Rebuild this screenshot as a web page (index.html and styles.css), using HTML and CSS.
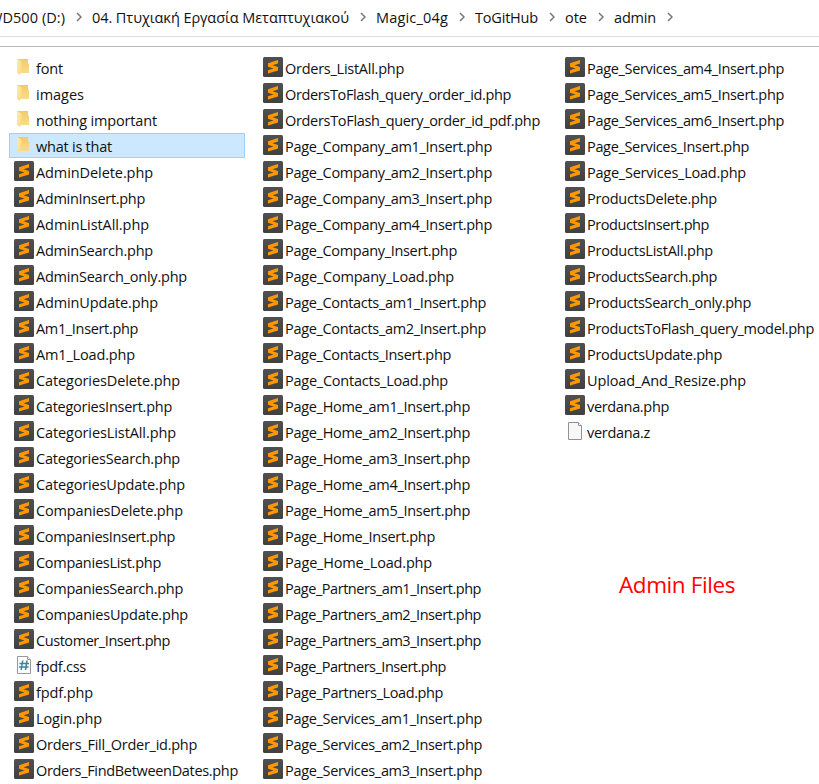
FILE: index.html
```html
<!DOCTYPE html>
<html lang="el">
<head>
<meta charset="utf-8">
<title>admin</title>
<link rel="stylesheet" href="styles.css">
</head>
<body>
<svg class="defs" width="0" height="0">
  <defs>
    <linearGradient id="front" x1="0" y1="0" x2="1" y2="1"><stop offset="0" stop-color="#ffedb0"/><stop offset="1" stop-color="#f6d880"/></linearGradient>
    <linearGradient id="back" x1="0" y1="0" x2="0" y2="1"><stop offset="0" stop-color="#f0cb68"/><stop offset="1" stop-color="#f8dc8e"/></linearGradient>
    <linearGradient id="dark" x1="0" y1="0" x2="0" y2="1"><stop offset="0" stop-color="#505050"/><stop offset="1" stop-color="#404040"/></linearGradient>
  </defs>
  <symbol id="folder" viewBox="0 0 20 20">
    <path d="M3 2h11v4l1 1v9H5z" fill="url(#back)"/>
    <path d="M3 2l4.500 2.500V14L6 18l-3-2z" fill="url(#front)"/>
  </symbol>
  <symbol id="php" viewBox="0 0 20 20">
    <rect width="20" height="20" rx="1.500" fill="url(#dark)"/>
    <path d="M5 6.200L15 3.100V6.500L9.500 8.200L15 9.900V13.400L5 16.600V13.200L10.500 11.400L5 9.700z" fill="#ff9800"/>
  </symbol>
  <symbol id="page" viewBox="0 0 20 20">
    <path d="M3.500 1.500h10l3 3v14h-13z" fill="#f7f7f7" stroke="#929292"/>
    <path d="M13.500 1.500v3h3" fill="#fff" stroke="#929292"/>
  </symbol>
  <symbol id="css" viewBox="0 0 20 20">
    <path d="M3.500 1.500h10l3 3v14h-13z" fill="#fcfcfc" stroke="#999"/>
    <path d="M13.500 1.500v3h3" fill="#fff" stroke="#999"/>
    <path d="M8.700 5.500L7.200 15M13 5.500L11.500 15M5.500 8.500h9.500M5 12h9.500" fill="none" stroke="#40819f" stroke-width="1.500"/>
  </symbol>
  <symbol id="chevron" viewBox="0 0 6 10"><path d="M1 1l4 4-4 4" fill="none" stroke="#777" stroke-width="1.500"/></symbol>
</svg>
<nav class="path" id="path"></nav>
<main class="files" id="files"></main>
<div class="caption"><span class="fit" data-width="116">Admin Files</span></div>
<script src="list.js"></script>
</body>
</html>
```

FILE: styles.css
```css
html, body { margin: 0; }
body {
  width: 819px;
  height: 784px;
  overflow: hidden;
  position: relative;
  background: #fff;
  color: #111;
  font-family: "Open Sans", "Noto Sans", sans-serif;
  font-size: 14.5px;
}
.defs { position: absolute; }
.path {
  display: flex;
  align-items: center;
  box-sizing: border-box;
  height: 37px;
  border-bottom: 1px solid #dcdcdc;
  white-space: nowrap;
}
.crumb { flex: none; line-height: 36px; }
.crumb:first-child { margin-left: -11px; }
.chevron { flex: none; width: 6px; height: 10px; margin: 0 10px 2px 11px; }
.files {
  display: grid;
  grid-template-columns: 249px 302px 250px;
  margin-top: 9px;
  padding: 8px 0 0 9px;
  border-top: 1px solid #b9b9b9;
}
.row {
  display: flex;
  align-items: center;
  box-sizing: border-box;
  height: 26px;
  padding-left: 5px;
  line-height: 20px;
  white-space: nowrap;
}
.row .fit { margin-top: 2px; }
.selected {
  width: 236px;
  height: 25px;
  margin-bottom: 1px;
  padding: 0 0 0 4px;
  border: 1px solid #99d1ff;
  background: #cce8ff;
}
.row.selected .fit { margin-top: 3px; }
.icon { flex: none; width: 20px; height: 20px; margin: 0 2px 2px 0; }
.fit { display: inline-block; flex: none; }
.caption {
  position: absolute;
  left: 619px;
  top: 569px;
  color: #f00;
  font-size: 22.5px;
  line-height: 32px;
  white-space: nowrap;
}
```

FILE: list.js
```js
const crumbs = [["WD500 (D:)", 76], ["04. Πτυχιακή Εργασία Μεταπτυχιακού", 257], ["Magic_04g", 72],
  ["ToGitHub", 63], ["ote", 22], ["admin", 42]];

const columns = [
  [["font", 27], ["images", 48], ["nothing important", 121], ["what is that", 76],
   ["AdminDelete.php", 117], ["AdminInsert.php", 109], ["AdminListAll.php", 113],
   ["AdminSearch.php", 117], ["AdminSearch_only.php", 151], ["AdminUpdate.php", 122],
   ["Am1_Insert.php", 102], ["Am1_Load.php", 99], ["CategoriesDelete.php", 144],
   ["CategoriesInsert.php", 136], ["CategoriesListAll.php", 140], ["CategoriesSearch.php", 144],
   ["CategoriesUpdate.php", 149], ["CompaniesDelete.php", 147], ["CompaniesInsert.php", 139],
   ["CompaniesList.php", 125], ["CompaniesSearch.php", 147], ["CompaniesUpdate.php", 152],
   ["Customer_Insert.php", 134], ["fpdf.css", 50], ["fpdf.php", 57], ["Login.php", 66],
   ["Orders_Fill_Order_id.php", 161], ["Orders_FindBetweenDates.php", 202]],
  [["Orders_ListAll.php", 119], ["OrdersToFlash_query_order_id.php", 226],
   ["OrdersToFlash_query_order_id_pdf.php", 255], ["Page_Company_am1_Insert.php", 207],
   ["Page_Company_am2_Insert.php", 207], ["Page_Company_am3_Insert.php", 207],
   ["Page_Company_am4_Insert.php", 207], ["Page_Company_Insert.php", 172],
   ["Page_Company_Load.php", 169], ["Page_Contacts_am1_Insert.php", 201],
   ["Page_Contacts_am2_Insert.php", 201], ["Page_Contacts_Insert.php", 166],
   ["Page_Contacts_Load.php", 163], ["Page_Home_am1_Insert.php", 185],
   ["Page_Home_am2_Insert.php", 185], ["Page_Home_am3_Insert.php", 185],
   ["Page_Home_am4_Insert.php", 185], ["Page_Home_am5_Insert.php", 185],
   ["Page_Home_Insert.php", 150], ["Page_Home_Load.php", 147],
   ["Page_Partners_am1_Insert.php", 196], ["Page_Partners_am2_Insert.php", 196],
   ["Page_Partners_am3_Insert.php", 196], ["Page_Partners_Insert.php", 161],
   ["Page_Partners_Load.php", 158], ["Page_Services_am1_Insert.php", 197],
   ["Page_Services_am2_Insert.php", 197], ["Page_Services_am3_Insert.php", 197]],
  [["Page_Services_am4_Insert.php", 197], ["Page_Services_am5_Insert.php", 197],
   ["Page_Services_am6_Insert.php", 197], ["Page_Services_Insert.php", 162],
   ["Page_Services_Load.php", 159], ["ProductsDelete.php", 130], ["ProductsInsert.php", 122],
   ["ProductsListAll.php", 126], ["ProductsSearch.php", 130], ["ProductsSearch_only.php", 164],
   ["ProductsToFlash_query_model.php", 227], ["ProductsUpdate.php", 135],
   ["Upload_And_Resize.php", 159], ["verdana.php", 82], ["verdana.z", 63]]
];

const icon = (id, cls) => `<svg class="${cls}"><use href="#${id}"/></svg>`;
const label = ([text, width], cls = "") => `<span class="fit ${cls}" data-width="${width}">${text}</span>`;

function kind(name) {
  if (name.endsWith(".php")) return "php";
  if (name.endsWith(".css")) return "css";
  return name.endsWith(".z") ? "page" : "folder";
}

document.getElementById("path").innerHTML =
  crumbs.map(c => label(c, "crumb") + icon("chevron", "chevron")).join("");

document.getElementById("files").innerHTML = columns.map(items =>
  `<div class="column">${items.map(item =>
    `<div class="row${item[0] === "what is that" ? " selected" : ""}">${icon(kind(item[0]), "icon")}${label(item)}</div>`
  ).join("")}</div>`).join("");

function fitLabels() {
  document.querySelectorAll(".fit").forEach(el => {
    el.style.letterSpacing = "0px";
    const gap = Number(el.dataset.width) - el.getBoundingClientRect().width;
    el.style.letterSpacing = `${gap / el.textContent.length}px`;
  });
}
fitLabels();
document.fonts.ready.then(fitLabels);
```
